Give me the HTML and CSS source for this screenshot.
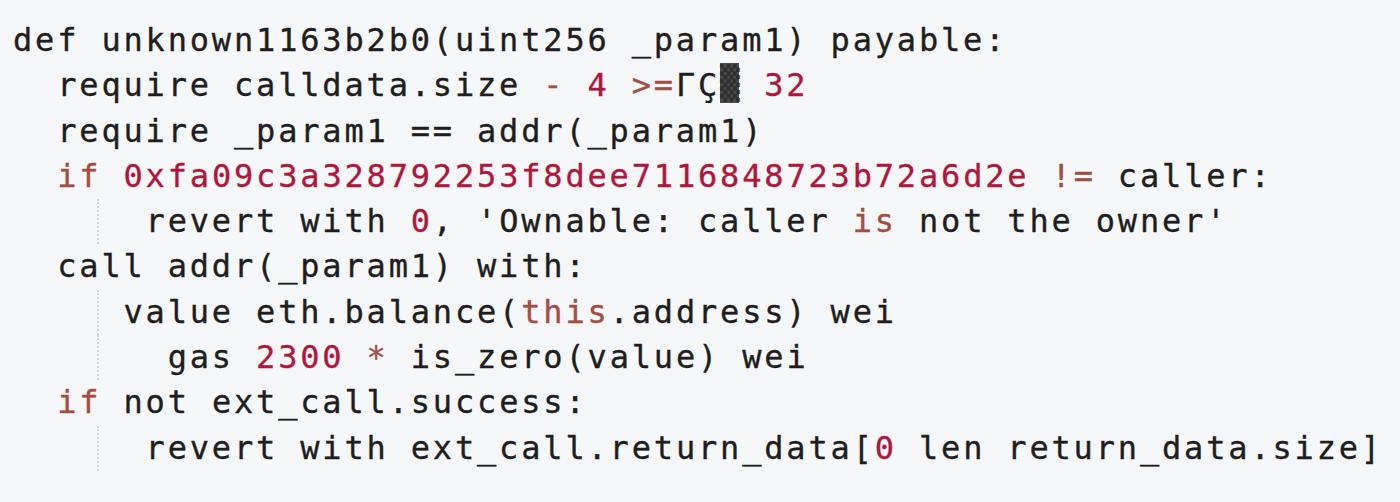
FILE: index.html
```html
<!DOCTYPE html>
<html>
<head>
<meta charset="utf-8">
<link rel="stylesheet" href="styles.css">
</head>
<body>
<div class="code">
<div class="line">def unknown1163b2b0(uint256 _param1) payable:</div>
<div class="line">  require calldata.size <span class="kw">-</span> <span class="num">4</span> <span class="kw">&gt;=</span>ΓÇ<span class="shade">▒</span> <span class="num">32</span></div>
<div class="line">  require _param1 == addr(_param1)</div>
<div class="line">  <span class="kw">if</span> <span class="num">0xfa09c3a328792253f8dee7116848723b72a6d2e</span> <span class="kw">!=</span> caller:</div>
<div class="line">    <span class="guide"></span>  revert with <span class="num">0</span>, 'Ownable: caller <span class="kw">is</span> not the owner'</div>
<div class="line">  call addr(_param1) with:</div>
<div class="line">    <span class="guide"></span> value eth.balance(<span class="kw">this</span>.address) wei</div>
<div class="line">    <span class="guide"></span>   gas <span class="num">2300</span> <span class="kw">*</span> is_zero(value) wei</div>
<div class="line">  <span class="kw">if</span> not ext_call.success:</div>
<div class="line">    <span class="guide"></span>  revert with ext_call.return_data[<span class="num">0</span> len return_data.size]</div>
</div>
</body>
</html>
```
FILE: styles.css
```css
html, body {
  margin: 0;
  padding: 0;
  background: #f6f7f9;
}
.code {
  padding: 18px 0 0 13px;
  font-family: "DejaVu Sans Mono", monospace;
  font-size: 32px;
  letter-spacing: 2.83px;
  line-height: 45.3px;
  color: #1e1e1e;
  -webkit-text-stroke: 0.35px currentColor;
}
.line {
  white-space: pre;
  height: 45.3px;
}
.kw {
  color: #a34e44;
}
.num {
  color: #b0173c;
}
.shade {
  display: inline-block;
  color: #2e2e2e;
  background: #4a4a4a;
  line-height: 40px;
  vertical-align: 2px;
  letter-spacing: 0;
  width: 19px;
  margin-right: 3px;
}
.guide {
  display: inline-block;
  width: 0;
  height: 45.3px;
  vertical-align: top;
  border-left: 2px dotted #d6d6d6;
  margin-left: -4px;
  margin-right: 2px;
}
```
